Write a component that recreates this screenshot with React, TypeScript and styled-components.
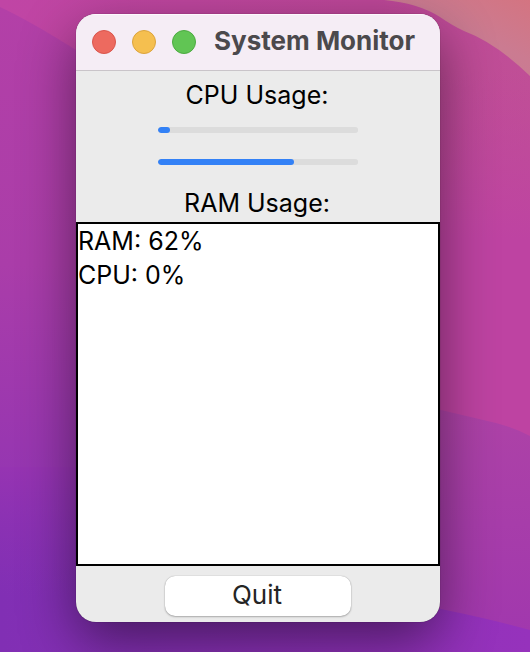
import React from "react";
import styled, { createGlobalStyle } from "styled-components";

const GlobalStyle = createGlobalStyle`
  *, *::before, *::after { box-sizing: border-box; }
  body { margin: 0; font-family: Inter, "Liberation Sans", sans-serif; }
`;

const Desktop = styled.main`
  position: relative;
  isolation: isolate;
  display: flex;
  min-height: 100vh;
  padding: 14px 90px 30px 76px;
  overflow: hidden;
`;

const WallpaperArt = styled.svg`
  position: absolute;
  inset: 0;
  z-index: -1;
  width: 100%;
  height: 100%;
`;

const Window = styled.section`
  display: flex;
  flex: 1;
  flex-direction: column;
  min-width: 0;
  overflow: hidden;
  border-radius: 20px;
  background: #ebebeb;
  box-shadow: 0 0 1px rgba(0, 0, 0, 0.6), 0 20px 56px rgba(0, 0, 0, 0.48);
`;

const TitleBar = styled.header`
  display: flex;
  align-items: center;
  gap: 18px;
  height: 57px;
  padding: 0 16px;
  border-bottom: 1px solid #c9c4c9;
  background: #f5edf5;
  box-shadow: inset 0 1px #fdf9fd;
`;

const WindowControls = styled.div`
  display: flex;
  gap: 16px;
`;

const ControlButton = styled.button<{ $fill: string; $edge: string }>`
  width: 24px;
  height: 24px;
  padding: 0;
  border: 1px solid ${({ $edge }) => $edge};
  border-radius: 50%;
  background: ${({ $fill }) => $fill};
`;

const Title = styled.h1`
  margin: 0;
  padding-bottom: 2px;
  color: #4b494c;
  font-size: 26px;
  font-weight: 700;
  line-height: 32px;
  white-space: nowrap;
`;

const Meters = styled.div`
  display: flex;
  flex-direction: column;
  align-items: center;
  padding: 7px 0 2px;
`;

const MeterLabel = styled.label`
  padding-right: 2px;
  color: #000;
  font-size: 25px;
  line-height: 34px;
`;

const Bars = styled.div`
  display: flex;
  flex-direction: column;
  gap: 26px;
  width: 55%;
  padding: 15px 0 21px;
`;

const Meter = styled.progress`
  display: block;
  width: 100%;
  height: 6px;
  overflow: hidden;
  border: 0;
  border-radius: 3px;
  background: #dcdcdc;
  appearance: none;

  &::-webkit-progress-bar {
    background: #dcdcdc;
    border-radius: 3px;
  }

  &::-webkit-progress-value {
    background: #3381f6;
    border-radius: 3px;
  }
`;

const Readings = styled.ul`
  flex: 1;
  margin: 0;
  padding: 0;
  border: 2px solid #000;
  background: #fff;
  list-style: none;
`;

const Reading = styled.li`
  color: #000;
  font-size: 25px;
  line-height: 34px;
`;

const Footer = styled.footer`
  display: flex;
  justify-content: center;
  padding: 10px 0 6px;
`;

const QuitButton = styled.button`
  width: 51%;
  height: 40px;
  padding: 0 2px 2px 0;
  border: 0;
  border-radius: 10px;
  background: #fff;
  box-shadow: 0 0 1px rgba(0, 0, 0, 0.35), 0 1px 2px rgba(0, 0, 0, 0.25);
  color: #252525;
  font-family: inherit;
  font-size: 26px;
  line-height: 32px;
`;

const controls = [
  { name: "Close", fill: "#ed6a5f", edge: "#d9554c" },
  { name: "Minimize", fill: "#f5bf4f", edge: "#dba33c" },
  { name: "Zoom", fill: "#61c554", edge: "#4caa40" },
];

const readings = ["RAM: 62%", "CPU: 0%"];

function Wallpaper() {
  return (
    <WallpaperArt viewBox="0 0 530 652" preserveAspectRatio="none" aria-hidden="true">
      <defs>
        <linearGradient id="base" x1="0" y1="0" x2="1" y2="0">
          <stop offset="0" stopColor="#c045a5" />
          <stop offset="0.7" stopColor="#be4799" />
          <stop offset="1" stopColor="#c04f96" />
        </linearGradient>
        <linearGradient id="magenta" x1="0" y1="0" x2="0" y2="1">
          <stop offset="0" stopColor="#be45a0" stopOpacity="0" />
          <stop offset="1" stopColor="#be43a2" />
        </linearGradient>
        <linearGradient id="left" x1="0" y1="0" x2="0" y2="1">
          <stop offset="0" stopColor="#b340a7" />
          <stop offset="0.4" stopColor="#aa3da9" />
          <stop offset="0.72" stopColor="#9636b1" />
          <stop offset="1" stopColor="#8430b2" />
        </linearGradient>
        <linearGradient id="peak" x1="0" y1="1" x2="1" y2="0">
          <stop offset="0" stopColor="#c47d98" />
          <stop offset="0.6" stopColor="#cb7b91" />
          <stop offset="1" stopColor="#d47481" />
        </linearGradient>
        <linearGradient id="right" x1="0" y1="0" x2="0" y2="1">
          <stop offset="0" stopColor="#ae43a6" />
          <stop offset="1" stopColor="#a037ae" />
        </linearGradient>
        <linearGradient id="foreground" x1="0" y1="0" x2="1" y2="0">
          <stop offset="0" stopColor="#812fb4" />
          <stop offset="1" stopColor="#9632bc" />
        </linearGradient>
        <linearGradient id="foregroundTop" x1="0" y1="0" x2="0" y2="1">
          <stop offset="0" stopColor="#9634b2" />
          <stop offset="0.7" stopColor="#8e32b3" stopOpacity="0" />
        </linearGradient>
      </defs>
      <path d="M0 0H530V652H0Z" fill="url(#base)" />
      <path d="M250 70H530V240H250Z" fill="url(#magenta)" />
      <path d="M250 240H530V652H250Z" fill="#be43a2" />
      <path d="M0 7Q30 21 76 50L220 145V652H0Z" fill="url(#left)" />
      <path d="M384 0Q418 3 440 17Q453 26 464 31Q496 43 530 76V0Z" fill="url(#peak)" />
      <path d="M360 395Q420 405 441 410L496 423Q512 427 530 436V652H260Z" fill="url(#right)" />
      <path d="M0 467H76Q250 540 441 609Q490 619 530 630V652H0Z" fill="url(#foreground)" />
      <path d="M0 467H76Q120 485 160 502V652H0Z" fill="url(#foregroundTop)" />
    </WallpaperArt>
  );
}

export default function App() {
  return (
    <>
      <GlobalStyle />
      <Desktop>
        <Wallpaper />
        <Window aria-labelledby="window-title">
          <TitleBar>
            <WindowControls>
              {controls.map(({ name, fill, edge }) => (
                <ControlButton key={name} type="button" aria-label={name} $fill={fill} $edge={edge} />
              ))}
            </WindowControls>
            <Title id="window-title">System Monitor</Title>
          </TitleBar>
          <Meters>
            <MeterLabel htmlFor="cpu">CPU Usage:</MeterLabel>
            <Bars>
              <Meter id="cpu" value={6} max={100} />
              <Meter id="ram" value={68} max={100} />
            </Bars>
            <MeterLabel htmlFor="ram">RAM Usage:</MeterLabel>
          </Meters>
          <Readings>
            {readings.map((text) => (
              <Reading key={text}>{text}</Reading>
            ))}
          </Readings>
          <Footer>
            <QuitButton type="button">Quit</QuitButton>
          </Footer>
        </Window>
      </Desktop>
    </>
  );
}
